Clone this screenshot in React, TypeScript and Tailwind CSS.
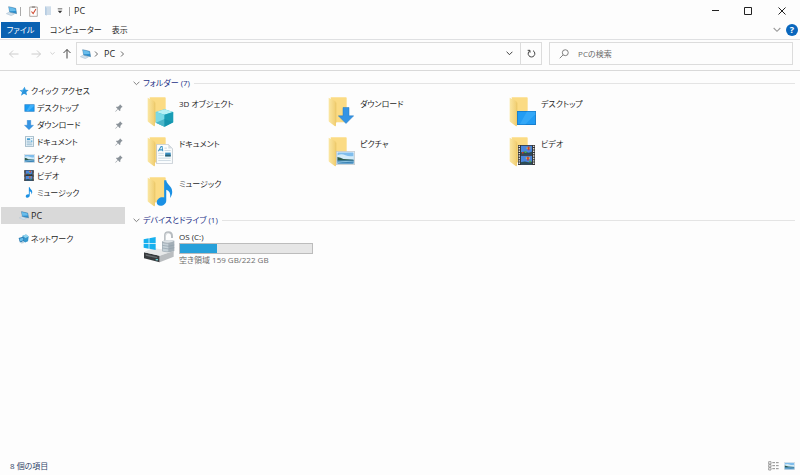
import type { ReactNode } from "react";

const FONT =
  "font-['Open_Sans','Noto_Sans_CJK_JP',sans-serif] [font-feature-settings:'palt']";

function PcIcon({ className = "" }: { className?: string }) {
  return (
    <svg viewBox="0 0 33 30" className={`shrink-0 ${className}`} aria-hidden="true">
      <path d="m1 23 9-5 15 6-9 5z" fill="#cfe0ec" stroke="#a9bfd0" strokeWidth="1.5" />
      <path d="m8 2 21 5 3 16-21-5z" fill="#2b8fd0" stroke="#4c7d9e" strokeWidth="1.5" />
      <path d="m9 3 19 5 1 7-18 1z" fill="#68bdec" />
    </svg>
  );
}

function StarIcon() {
  return (
    <svg viewBox="0 0 30 30" className="h-[10px] w-[10px]" aria-hidden="true">
      <path d="m17 2 3 9 9 1-7 6 2 10-9-5-9 6 3-10-7-6 9-2z" fill="#2a94dc" />
      <path d="m17 2-2 10-13 1 8 5z" fill="#62bbf2" />
    </svg>
  );
}

function DesktopIcon() {
  return (
    <svg viewBox="0 0 30 24" className="h-[8px] w-[11px]" aria-hidden="true">
      <path d="M0 1h30v22H0z" fill="#1177c8" />
      <path d="M2 3h26v18H2z" fill="#1b9cf2" />
      <path d="M17 3h11v4L12 21H6z" fill="#3eb0fa" />
    </svg>
  );
}

function ArrowDownIcon({ className = "h-[10px] w-[10px]" }: { className?: string }) {
  return (
    <svg viewBox="0 0 48 50" className={className} aria-hidden="true">
      <path d="M15 1h18v25h14L24 49 1 26h14z" fill="#3494e4" stroke="#2378c3" strokeWidth="1.5" />
    </svg>
  );
}

function DocIcon() {
  return (
    <svg viewBox="0 0 24 30" className="h-[11px] w-[9px]" aria-hidden="true">
      <path d="M1 1h22v28H1z" fill="#f2f9fd" stroke="#86a4b7" strokeWidth="2" />
      <path d="M5 6h9v5H5zM15 12h5v4h-5z" fill="#469ed2" />
      <path d="M4 14h9M4 19h16M4 24h16M16 7h4" stroke="#6a9cbc" strokeWidth="2" />
    </svg>
  );
}

function PictureIcon({ className = "h-[9px] w-[11px]" }: { className?: string }) {
  return (
    <svg viewBox="0 0 54 40" preserveAspectRatio="none" className={className} aria-hidden="true">
      <path d="M1 1h52v38H1z" fill="#fff" stroke="#a9b4bc" strokeWidth="2" />
      <path d="M4 4h46v32H4z" fill="#7fbdec" />
      <path d="M4 12q12-5 23 0t23 2v10H4z" fill="#d3ebf8" />
      <path d="M4 17q9 1 17 6l29 2v3H4z" fill="#2d5a4c" />
      <path d="M4 27h46v9H4z" fill="#3a82b5" />
      <path d="M4 31q20-5 46-1v2q-26-2-46 2z" fill="#8fc4df" />
    </svg>
  );
}

function FilmIcon({ className = "h-[11px] w-[10px]" }: { className?: string }) {
  return (
    <svg viewBox="0 0 52 58" preserveAspectRatio="none" className={className} aria-hidden="true">
      <path d="M0 0h52v58H0z" fill="#343434" />
      <path d="M4 2v55M48 2v55" stroke="#e4e4e4" strokeWidth="4" strokeDasharray="4 3" />
      <path d="M9 2h34v25H9zM9 31h34v25H9z" fill="#4a86dc" />
      <path d="M9 21q10-3 18 0t16-2v8H9zM9 50q12-4 19-1t15-1v8H9z" fill="#2c4c55" />
      <path d="M26 7h12v4H26zM24 36h13v4H24z" fill="#f0b834" />
      <path d="M30 4h5v11h-5zM12 20h5v5h-5zM28 34h5v11h-5z" fill="#cc3c2c" />
      <path d="M20 18h6v5h-6zM34 46h6v4h-6z" fill="#4faa49" />
    </svg>
  );
}

function NoteIcon({ className = "h-[11px] w-[8px]" }: { className?: string }) {
  return (
    <svg viewBox="0 0 46 74" className={className} aria-hidden="true">
      <path
        d="M22 1h6c1 12 17 16 17 33 0 7-3 12-6 17 2-14-3-20-11-23v30c0 9-8 15-16 15C5 73 1 69 1 63c0-8 8-14 16-14 2 0 4 0 5 1z"
        fill="#1a90e4"
      />
    </svg>
  );
}

function NetworkIcon() {
  return (
    <svg viewBox="0 0 34 30" className="h-[10px] w-[11px]" aria-hidden="true">
      <path d="m14 5 11-4 8 6-2 15-9 4-9-6z" fill="#3597cd" />
      <path d="m14 5 11-4 8 6-10 5z" fill="#91d5ef" />
      <path d="m2 12 14-4 3 13-13 5z" fill="#2576ad" />
      <path d="m4 14 11-3 2 8-10 4z" fill="#65bce9" />
      <path d="m7 26 9-3 3 4-9 2z" fill="#b8cedb" />
    </svg>
  );
}

function PinIcon() {
  return (
    <svg viewBox="0 0 24 24" className="h-[8px] w-[8px]" aria-label="ピン留め">
      <path d="m15 1 8 8-3 1-4 5v5l-2 1-5-5-7 7-1-1 7-7-5-5 1-2h5l5-4z" fill="#8a9299" />
    </svg>
  );
}

function Chevron({ d, className = "" }: { d: "down" | "right"; className?: string }) {
  return (
    <svg viewBox="0 0 12 12" className={`shrink-0 ${className}`} fill="none" stroke="currentColor" aria-hidden="true">
      <path d={d === "down" ? "m1 3 5 5 5-5" : "m4 1 5 5-5 5"} strokeWidth="1.6" />
    </svg>
  );
}

function Folder({ children }: { children: ReactNode }) {
  return (
    <span className="relative block h-[30px] w-[28px] shrink-0">
      <svg viewBox="0 0 84 90" className="h-[30px] w-[28px]" aria-hidden="true">
        <defs>
          <linearGradient id="flap" x1="0" x2="1" y1="0" y2="0">
            <stop offset="0" stopColor="#fbe7a3" />
            <stop offset="1" stopColor="#f0cd70" />
          </linearGradient>
        </defs>
        <path d="M8 1h46q2 0 2 2v73H20z" fill="#fbdb84" />
        <path d="m2 2 19 10q3 2 3 5v67q0 5-4 3L4 75q-2-1-2-4z" fill="url(#flap)" />
        <path d="M24 17v60" stroke="#e3bd5c" strokeWidth="1.5" />
      </svg>
      {children}
    </span>
  );
}

function CubeOverlay() {
  return (
    <svg viewBox="0 0 56 54" className="absolute bottom-0 right-px h-[18px] w-[19px]" aria-hidden="true">
      <path d="M28 1 54 9v31L28 53 2 41V9z" fill="#31b7cb" />
      <path d="M28 1 54 9 28 17 2 9z" fill="#b6f0f5" />
      <path d="m2 9 26 8v36L2 41z" fill="#7ad9e6" />
      <path d="m28 17 26-8v31L28 53z" fill="#1a9db5" />
      <path d="M2 41 28 30l26 10-26 13z" fill="#128aa5" opacity=".45" />
    </svg>
  );
}

function DocOverlay() {
  return (
    <svg viewBox="0 0 48 58" className="absolute bottom-[3px] right-[2px] h-[20px] w-[17px]" aria-hidden="true">
      <path d="M1 1h34l12 12v44H1z" fill="#fbfdfe" stroke="#b5bec5" strokeWidth="2" />
      <path d="M35 1v12h12z" fill="#d6dde2" />
      <path d="m6 21 8-14h3l2 14M9 17h10" fill="none" stroke="#3f96c7" strokeWidth="3" />
      <path d="M24 12h7M24 19h18M6 27h16M6 33h16M6 41h36M6 48h36" stroke="#b9cad5" strokeWidth="2" />
      <path d="M26 25h16v11H26z" fill="#3b8fc2" />
      <path d="M26 31h16v5H26z" fill="#2c6173" />
    </svg>
  );
}

function DesktopOverlay() {
  return (
    <svg viewBox="0 0 54 40" className="absolute bottom-[2px] right-px h-[14px] w-[19px]" aria-hidden="true">
      <path d="M0 0h54v40H0z" fill="#1374c0" />
      <path d="M2 2h50v36H2z" fill="#219cf3" />
      <path d="M28 2h24v7L24 38H8z" fill="#34a8f7" />
    </svg>
  );
}

function DriveIcon() {
  return (
    <svg viewBox="0 0 96 96" className="h-[32px] w-[32px] shrink-0" aria-hidden="true">
      <path d="M3 64 30 52l64 10-18 12-56-3z" fill="#dcdedf" />
      <path d="M3 64 50 74v20L3 82z" fill="#373a3d" />
      <path d="m50 74 42-14v17L50 94z" fill="#babdc0" />
      <path d="M3 64 32 52l60 8-42 14z" fill="#e7e8e9" />
      <path d="m8 70 35 8v4L8 74z" fill="#686d70" />
      <path d="M38 84h7v4h-7z" fill="#6bd1d4" />
      <path d="m2 25 15-3v15H2zM19 22l19-4v19H19zM2 39h15v14L2 50zM19 39h19v18l-19-4z" fill="#17b0ee" />
      <path d="M66 31V14q0-10 10-10 11 0 11 12v5" fill="none" stroke="#b7bcc0" strokeWidth="6" />
      <path d="M67 31V14q0-8 9-8" fill="none" stroke="#e5e8ea" strokeWidth="2" />
      <path d="M57 31q18-7 37-2v31q-19 7-37 1z" fill="#a4afb7" />
      <path d="M57 31q18-7 37-2-5 5-18 6-13 1-19-4z" fill="#dbe1e5" />
      <path d="M59 36q7 3 17 2v23q-10 1-17-2z" fill="#c5d0d7" />
      <path d="M58 43q18 6 36-1M58 51q18 6 36-1" fill="none" stroke="#8fa0ab" strokeWidth="2" />
    </svg>
  );
}

const quickAccess = [
  { label: "デスクトップ", icon: <DesktopIcon />, pinned: true },
  { label: "ダウンロード", icon: <ArrowDownIcon />, pinned: true },
  { label: "ドキュメント", icon: <DocIcon />, pinned: true },
  { label: "ピクチャ", icon: <PictureIcon />, pinned: true },
  { label: "ビデオ", icon: <FilmIcon />, pinned: false },
  { label: "ミュージック", icon: <NoteIcon />, pinned: false },
];

const folders = [
  { label: "3D オブジェクト", overlay: <CubeOverlay /> },
  { label: "ダウンロード", overlay: <ArrowDownIcon className="absolute bottom-[3px] right-[2px] h-[17px] w-[16px]" /> },
  { label: "デスクトップ", overlay: <DesktopOverlay /> },
  { label: "ドキュメント", overlay: <DocOverlay /> },
  { label: "ピクチャ", overlay: <PictureIcon className="absolute bottom-[2px] right-px h-[14px] w-[19px]" /> },
  { label: "ビデオ", overlay: <FilmIcon className="absolute bottom-[2px] right-[2px] h-[20px] w-[17px]" /> },
  { label: "ミュージック", overlay: <NoteIcon className="absolute bottom-px right-[2px] h-[26px] w-[17px]" /> },
];

function TitleBar() {
  return (
    <header className="flex h-[22px] items-center pl-[6px]">
      <PcIcon className="h-[10px] w-[11px]" />
      <span className="ml-[3px] h-[9px] w-px bg-[#aaa]" />
      <button aria-label="プロパティ" className="ml-[8px]">
        <svg viewBox="0 0 26 32" className="h-[11px] w-[9px]">
          <path d="M2 3h22v27H2z" fill="#fff" stroke="#8e8580" strokeWidth="2" />
          <path d="M8 1h10v4H8z" fill="#8e8580" />
          <path d="m7 16 5 6 8-13" fill="none" stroke="#d1492f" strokeWidth="3" />
        </svg>
      </button>
      <button aria-label="新しいフォルダー" className="ml-[6px]">
        <svg viewBox="0 0 24 30" className="h-[10px] w-[8px]">
          <path d="M3 1h18v26H3z" fill="#cfddea" />
          <path d="m3 1 5 5v23l-5-3z" fill="#b5cce2" />
        </svg>
      </button>
      <button aria-label="カスタマイズ" className="ml-[5px]">
        <svg viewBox="0 0 16 16" className="h-[6px] w-[6px]">
          <path d="M2 1h12v2H2zM2 7h12l-6 7z" fill="#333" />
        </svg>
      </button>
      <span className="ml-[6px] h-[9px] w-px bg-[#aaa]" />
      <h1 className="ml-[4px] text-[9px]">PC</h1>
      <div className="ml-auto flex items-center text-[#222]">
        <button aria-label="最小化" className="flex w-[33px] justify-center">
          <svg viewBox="0 0 8 8" className="h-[8px] w-[8px]" stroke="currentColor"><path d="M1 3.5h7" /></svg>
        </button>
        <button aria-label="最大化" className="flex w-[33px] justify-center">
          <svg viewBox="0 0 8 8" className="h-[8px] w-[8px]" fill="none" stroke="currentColor"><path d="M.5.5h7v7h-7z" /></svg>
        </button>
        <button aria-label="閉じる" className="flex w-[36px] justify-center">
          <svg viewBox="0 0 8 8" className="h-[8px] w-[8px]" stroke="currentColor"><path d="m.5.5 7 7m0-7-7 7" /></svg>
        </button>
      </div>
    </header>
  );
}

function Ribbon() {
  return (
    <nav className="flex h-[18px] items-start border-b border-[#dfe0e2] pl-px">
      <button className="h-[16px] w-[39px] bg-[#0a62b2] text-center leading-[16px] text-white">ファイル</button>
      <button className="ml-[10px] h-[16px] leading-[16px]">コンピューター</button>
      <button className="ml-[10px] h-[16px] leading-[16px]">表示</button>
      <div className="ml-auto flex h-[16px] items-center gap-[5px] pr-[2px]">
        <button aria-label="リボンの展開" className="text-[#999]">
          <Chevron d="down" className="h-[8px] w-[8px]" />
        </button>
        <button aria-label="ヘルプ" className="h-[12px] w-[12px] rounded-full bg-[#0a67bd] text-center text-[9px] font-bold leading-[12px] text-white">
          ?
        </button>
      </div>
    </nav>
  );
}

function NavArrow({ label, path, className = "" }: { label: string; path: string; className?: string }) {
  return (
    <button aria-label={label} className={className}>
      <svg viewBox="0 0 10 10" className="h-[10px] w-[10px]" fill="none" stroke="currentColor">
        <path d={path} />
      </svg>
    </button>
  );
}

function AddressBar() {
  return (
    <div className="flex h-[31px] items-center border-b border-[#d9d9d9] pb-[3px] pl-[9px] pr-[7px]">
      <NavArrow label="戻る" path="M.5 5h9M4 1.5.5 5 4 8.5" className="text-[#ccc]" />
      <NavArrow label="進む" path="M.5 5h9M6 1.5 9.5 5 6 8.5" className="ml-[12px] text-[#ccc]" />
      <button aria-label="履歴" className="ml-[9px] text-[#bbb]">
        <Chevron d="down" className="h-[5px] w-[5px]" />
      </button>
      <NavArrow label="上へ" path="M5 9.5v-9M1.5 4 5 .5 8.5 4" className="ml-[7px] text-[#444]" />
      <div className="ml-[4px] flex h-[23px] flex-[468] items-center border border-[#dcdcdc]">
        <PcIcon className="ml-[3px] h-[10px] w-[11px]" />
        <Chevron d="right" className="ml-[2px] h-[6px] w-[6px] text-[#444]" />
        <button className="ml-[5px] text-[9px]">PC</button>
        <Chevron d="right" className="ml-[4px] h-[6px] w-[6px] text-[#444]" />
        <button aria-label="以前の場所" className="ml-auto mr-[7px] text-[#333]">
          <Chevron d="down" className="h-[7px] w-[7px]" />
        </button>
        <button aria-label="最新の情報に更新" className="flex h-full w-[21px] items-center justify-center border-l border-[#dcdcdc]">
          <svg viewBox="0 0 27 27" className="h-[9px] w-[9px]" fill="none" stroke="#444" strokeWidth="3">
            <path d="M18 5a10 10 0 1 1-9 0M9 11V4H2" />
          </svg>
        </button>
      </div>
      <label className="ml-[7px] flex h-[23px] flex-[244] items-center border border-[#dcdcdc]">
        <svg viewBox="0 0 27 27" className="ml-[9px] h-[10px] w-[10px] shrink-0" fill="none" stroke="#777" strokeWidth="2.5">
          <circle cx="17" cy="10" r="8" />
          <path d="m11 16-9 9" />
        </svg>
        <input
          type="text"
          aria-label="PCの検索"
          placeholder="PCの検索"
          className="ml-[9px] min-w-0 flex-1 bg-transparent outline-none placeholder:text-[#6b6b6b]"
        />
      </label>
    </div>
  );
}

function Sidebar() {
  return (
    <aside className="w-[125px] shrink-0 pl-px pt-[11px]">
      <a href="#quick" className="flex h-[17px] items-center pl-[18px]">
        <StarIcon />
        <span className="ml-[2px]">クイック アクセス</span>
      </a>
      <ul>
        {quickAccess.map((item) => (
          <li key={item.label}>
            <a href="#item" className="flex h-[17px] items-center pl-[22px]">
              <span className="flex w-[12px] justify-center">{item.icon}</span>
              <span className="ml-[2px]">{item.label}</span>
              {item.pinned && <span className="ml-auto mr-[2px]"><PinIcon /></span>}
            </a>
          </li>
        ))}
      </ul>
      <a href="#pc" aria-current="page" className="mt-[6px] flex h-[17px] items-center bg-[#d9d9d9] pl-[18px] text-[9px]">
        <PcIcon className="h-[9px] w-[10px]" />
        <span className="ml-[2px]">PC</span>
      </a>
      <a href="#network" className="mt-[6px] flex h-[17px] items-center pl-[17px]">
        <NetworkIcon />
        <span className="ml-[2px]">ネットワーク</span>
      </a>
    </aside>
  );
}

function GroupHeader({ children }: { children: ReactNode }) {
  return (
    <h2 className="flex h-[14px] items-center text-[#1e3287]">
      <Chevron d="down" className="mr-[3px] h-[7px] w-[7px] text-[#777]" />
      <button>{children}</button>
      <span className="ml-[4px] h-px flex-1 bg-[#e4e4e4]" />
    </h2>
  );
}

function Content() {
  return (
    <main className="min-w-0 flex-1 pl-[8px] pr-[5px] pt-[5px]">
      <GroupHeader>フォルダー (7)</GroupHeader>
      <ul className="mb-[3px] mt-[7px] grid grid-cols-[repeat(auto-fill,181px)] gap-y-[10px] pl-[14px]">
        {folders.map((f) => (
          <li key={f.label} className="h-[30px]">
            <button className="flex items-start">
              <Folder>{f.overlay}</Folder>
              <span className="ml-[4px] leading-[14px]">{f.label}</span>
            </button>
          </li>
        ))}
      </ul>
      <div className="pt-[3px]">
        <GroupHeader>デバイスとドライブ (1)</GroupHeader>
      </div>
      <button className="ml-[10px] mt-[4px] flex items-start text-left">
        <DriveIcon />
        <span className="ml-[4px] block w-[134px]">
          <span className="block h-[12px] leading-[12px]">OS (C:)</span>
          <span className="block h-[11px] border border-[#bcbcbc] bg-[#e6e6e6]">
            <span className="block h-full w-[28%] bg-[#26a0da]" />
          </span>
          <span className="block leading-[12px] text-[#6d6d6d]">空き領域 159 GB/222 GB</span>
        </span>
      </button>
    </main>
  );
}

function StatusBar() {
  return (
    <footer className="flex h-[18px] items-center pl-[10px] pr-[5px] text-[#33466b]">
      <span>8 個の項目</span>
      <button aria-label="詳細" className="ml-auto">
        <svg viewBox="0 0 33 30" className="h-[10px] w-[11px]" fill="none" stroke="#777" strokeWidth="2">
          <path d="M2 2h7v7H2zM2 11h7v7H2zM2 20h7v7H2z" />
          <path d="M13 5h8M24 5h8M13 14h8M24 14h8M13 23h8M24 23h8" stroke="#555" />
        </svg>
      </button>
      <button aria-label="大アイコン" className="ml-[5px]">
        <PictureIcon className="h-[8px] w-[11px]" />
      </button>
    </footer>
  );
}

export default function App() {
  return (
    <div lang="ja" className={`flex min-h-screen flex-col bg-[#fdfdfd] text-[8px] leading-[12px] text-[#1f1f1f] ${FONT}`}>
      <TitleBar />
      <Ribbon />
      <AddressBar />
      <div className="flex flex-1">
        <Sidebar />
        <Content />
      </div>
      <StatusBar />
    </div>
  );
}
